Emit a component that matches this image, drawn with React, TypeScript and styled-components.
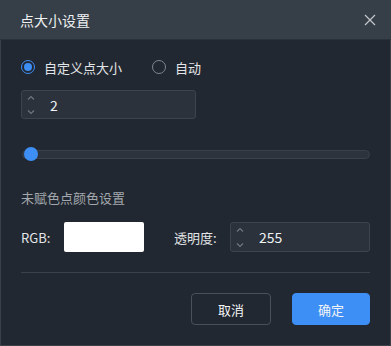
import React from 'react'
import styled, { createGlobalStyle } from 'styled-components'

const Global = createGlobalStyle`
  html, body { margin: 0; padding: 0; background: #222831; }
  * { box-sizing: border-box; }
`

const Dialog = styled.div`
  width: 391px;
  height: 346px;
  background: #222831;
  border: 1px solid #3a414b;
  border-top: none;
  display: flex;
  flex-direction: column;
  font-family: "Noto Sans CJK SC", "Noto Sans", sans-serif;
  color: #e6e8eb;
`

const Header = styled.div`
  height: 40px;
  background: #363e48;
  border-bottom: 1px solid #2b3139;
  display: flex;
  align-items: center;
  justify-content: space-between;
  padding: 0 14px 0 20px;
  margin: 0 -1px;
`

const Title = styled.span`
  font-size: 14px;
  color: #eef0f2;
`

const Close = styled.button`
  width: 12px;
  height: 12px;
  padding: 0;
  border: none;
  background: none;
  display: flex;
  margin-right: 1px;
`

const Body = styled.div`
  padding: 0 20px;
  display: flex;
  flex-direction: column;
`

const RadioRow = styled.div`
  margin-top: 17px;
  height: 20px;
  display: flex;
  align-items: center;
  gap: 30px;
`

const RadioItem = styled.label`
  display: flex;
  align-items: center;
  gap: 9px;
  font-size: 13px;
  color: #e3e5e8;
`

const Circle = styled.span<{ $on?: boolean }>`
  width: 14px;
  height: 14px;
  border-radius: 50%;
  border: 1px solid ${p => (p.$on ? '#3d8ef5' : '#80868e')};
  display: flex;
  align-items: center;
  justify-content: center;
  &::after {
    content: '';
    width: 8px;
    height: 8px;
    border-radius: 50%;
    background: ${p => (p.$on ? '#3d8ef5' : 'transparent')};
  }
`

const Spin = styled.div<{ $w: number; $mt?: number }>`
  width: ${p => p.$w}px;
  height: ${p => (p.$mt ? 29 : 30)}px;
  margin-top: ${p => p.$mt ?? 0}px;
  background: #2b323c;
  border: 1px solid #3d444e;
  border-radius: 3px;
  display: flex;
  align-items: center;
`

const Arrows = styled.div`
  width: 18px;
  display: flex;
  flex-direction: column;
  align-items: center;
  justify-content: space-between;
  height: 100%;
  padding: 4px 0 3px;
  margin-right: 10px;
`

const Value = styled.span`
  font-size: 14px;
  color: #f0f2f4;
`

const Slider = styled.div`
  margin-top: 28px;
  height: 14px;
  display: flex;
  align-items: center;
  position: relative;
`

const Track = styled.div`
  flex: 1;
  height: 9px;
  margin-left: 1px;
  border-radius: 5px;
  background: #2c333d;
  border: 1px solid #3a414b;
`

const Thumb = styled.span`
  position: absolute;
  left: 3px;
  top: 0;
  width: 14px;
  height: 14px;
  border-radius: 50%;
  background: #3d8ef5;
`

const Section = styled.div`
  margin-top: 27px;
  line-height: 20px;
  font-size: 13px;
  color: #a3a8ae;
`

const ColorRow = styled.div`
  margin-top: 14px;
  display: flex;
  align-items: center;
`

const Label = styled.span<{ $w: number }>`
  width: ${p => p.$w}px;
  font-size: 13px;
  color: #e3e5e8;
`

const Swatch = styled.div`
  width: 80px;
  height: 30px;
  background: #ffffff;
  border-radius: 2px;
  margin-right: 30px;
`

const Divider = styled.div`
  margin-top: 20px;
  height: 1px;
  background: #3a414b;
`

const Footer = styled.div`
  margin-top: 20px;
  display: flex;
  justify-content: flex-end;
  gap: 21px;
`

const Button = styled.button<{ $primary?: boolean }>`
  width: ${p => (p.$primary ? 78 : 80)}px;
  height: 32px;
  border-radius: 4px;
  font-family: inherit;
  font-size: 13px;
  color: #f2f4f6;
  background: ${p => (p.$primary ? '#3d8ef5' : 'transparent')};
  border: 1px solid ${p => (p.$primary ? '#3d8ef5' : '#4a5059')};
`

const Chevron = ({ up }: { up?: boolean }) => (
  <svg width="8" height="5" viewBox="0 0 8 5">
    <path d={up ? 'M1 4.5L4 1.5L7 4.5' : 'M1 0.5L4 3.5L7 0.5'} stroke="#6f767f" strokeWidth="1.2" fill="none" />
  </svg>
)

const SpinInput = ({ value, width, mt }: { value: string; width: number; mt?: number }) => (
  <Spin $w={width} $mt={mt}>
    <Arrows>
      <Chevron up />
      <Chevron />
    </Arrows>
    <Value>{value}</Value>
  </Spin>
)

export default function App() {
  return (
    <Dialog>
      <Global />
      <Header>
        <Title>点大小设置</Title>
        <Close>
          <svg width="12" height="12" viewBox="0 0 12 12">
            <path d="M1 1L11 11M11 1L1 11" stroke="#c3c7cc" strokeWidth="1.2" />
          </svg>
        </Close>
      </Header>
      <Body>
        <RadioRow>
          <RadioItem><Circle $on />自定义点大小</RadioItem>
          <RadioItem><Circle />自动</RadioItem>
        </RadioRow>
        <SpinInput value="2" width={175} mt={13} />
        <Slider>
          <Track />
          <Thumb />
        </Slider>
        <Section>未赋色点颜色设置</Section>
        <ColorRow>
          <Label $w={43}>RGB:</Label>
          <Swatch />
          <Label $w={56}>透明度:</Label>
          <SpinInput value="255" width={140} />
        </ColorRow>
        <Divider />
        <Footer>
          <Button>取消</Button>
          <Button $primary>确定</Button>
        </Footer>
      </Body>
    </Dialog>
  )
}
